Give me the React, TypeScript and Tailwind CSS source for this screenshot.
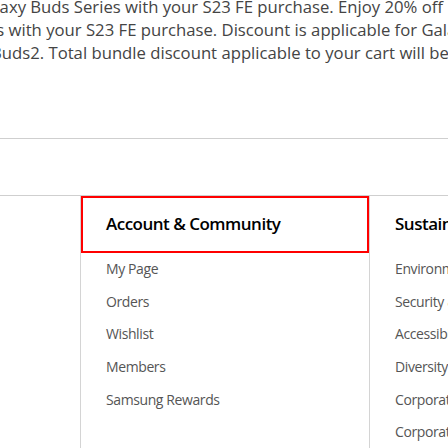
const account = ['My Page', 'Orders', 'Wishlist', 'Members', 'Samsung Rewards']

const sustainability = [
  'Environment',
  'Security & Privacy',
  'Accessibility',
  'Diversity & Inclusion',
  'Corporate Citizenship',
  'Corporate Sustainability',
]

function FooterColumn({ title, items, focused }: { title: string; items: string[]; focused?: boolean }) {
  return (
    <div className="flex flex-col">
      <div
        className={`h-[57px] flex items-center text-[17px] font-semibold tracking-[-0.5px] text-[#000] whitespace-nowrap ${
          focused ? 'border-2 border-[#ff0000] pl-[23px]' : 'pl-[25px]'
        }`}
      >
        <span className="-mt-[2px]">{title}</span>
      </div>
      <ul className="flex flex-col">
        {items.map((item) => (
          <li
            key={item}
            className="h-[32.6px] flex items-center pl-[25px] text-[14px] text-[#555] tracking-[-0.4px] whitespace-nowrap"
          >
            <span className="-mt-[1px]">{item}</span>
          </li>
        ))}
      </ul>
    </div>
  )
}

export default function App() {
  return (
    <div className="w-[448px] h-[448px] overflow-hidden bg-white font-['Open_Sans',sans-serif]">
      {/* promo notice, clipped on both sides */}
      <div className="h-[143px] -mt-[5px] text-[16.7px] leading-[23px] text-[#444] whitespace-nowrap">
        <p className="-ml-[26px]">Galaxy Buds Series with your S23 FE purchase. Enjoy 20% off</p>
        <p className="-ml-[35px]">Buds with your S23 FE purchase. Discount is applicable for Galaxy</p>
        <p className="-ml-[9px]">Buds2. Total bundle discount applicable to your cart will be</p>
      </div>

      <div className="border-t border-[#cfcfcf] h-[57px]" />

      <div className="flex border-t border-[#cfcfcf] h-[260px]">
        <div className="w-[80px] shrink-0" />
        <div className="w-[289px] shrink-0 border-l border-[#d4d4d4]">
          <FooterColumn title="Account & Community" items={account} focused />
        </div>
        <div className="flex-1 border-l border-[#d4d4d4]">
          <FooterColumn title="Sustainability" items={sustainability} />
        </div>
      </div>
    </div>
  )
}
